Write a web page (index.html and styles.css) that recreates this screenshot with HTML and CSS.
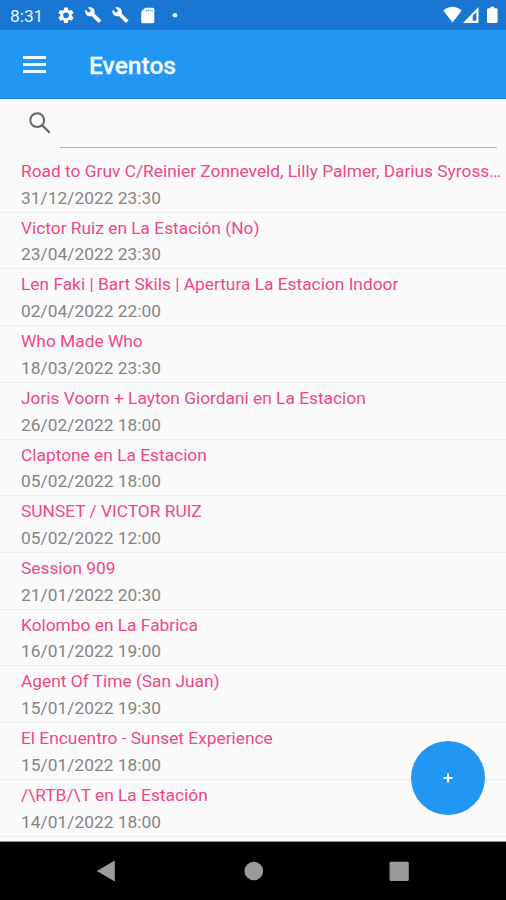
FILE: index.html
```html
<!DOCTYPE html>
<html lang="es">
<head>
<meta charset="utf-8">
<title>Eventos</title>
<link rel="stylesheet" href="styles.css">
</head>
<body>
<div class="screen">
  <div class="status">
    <span class="clock">8:31</span>
    <svg class="tray" width="126" height="30" viewBox="0 0 126 30" fill="#fff">
      <path transform="translate(-.6 5.7) scale(.8)" d="M19.14 12.94c.04-.3.06-.61.06-.94s-.02-.64-.07-.94l2.03-1.58a.49.49 0 0 0 .12-.61l-1.92-3.32a.49.49 0 0 0-.59-.22l-2.39.96a7 7 0 0 0-1.62-.94l-.36-2.54A.48.48 0 0 0 13.92 2.4h-3.84a.47.47 0 0 0-.47.41l-.36 2.54a7.4 7.4 0 0 0-1.62.94l-2.39-.96a.48.48 0 0 0-.59.22L2.74 8.87a.47.47 0 0 0 .12.61l2.03 1.58c-.05.3-.09.63-.09.94s.02.64.07.94l-2.03 1.58a.49.49 0 0 0-.12.61l1.92 3.32c.12.22.37.29.59.22l2.39-.96c.5.38 1.03.7 1.62.94l.36 2.54c.05.24.24.41.48.41h3.84c.24 0 .44-.17.47-.41l.36-2.54a7 7 0 0 0 1.62-.94l2.39.96c.22.08.47 0 .59-.22l1.92-3.32a.47.47 0 0 0-.12-.61zM12 15.6A3.6 3.6 0 1 1 12 8.400a3.6 3.6 0 0 1 0 7.2z"/>
      <path id="wrench" transform="translate(27.4 6.4) scale(.73 .71)" d="M22.7 19l-9.100-9.100c.9-2.300.4-5-1.500-6.900-2-2-5-2.400-7.400-1.300L9 6 6 9 1.600 4.700C.4 7.100.9 10.100 2.900 12.100c1.900 1.900 4.600 2.400 6.900 1.500l9.100 9.100c.4.4 1 .4 1.400 0l2.300-2.300c.5-.4.5-1.100.1-1.400z"/>
      <use href="#wrench" transform="translate(27.3 0)"/>
      <path fill-rule="evenodd" d="M88.200 7.700h7.600q1.500 0 1.500 1.500v12.600q0 1.500-1.500 1.500H85.700q-1.500 0-1.500-1.500V11.700z"/>
      <path d="M88.300 10.500h7.500" stroke="#5a9ce2" stroke-width="1.300" stroke-dasharray="1.500 .8"/>
      <circle cx="118" cy="15.3" r="2.3"/>
    </svg>
    <svg class="signals" width="58" height="30" viewBox="0 0 58 30" fill="#fff">
      <path d="M1.300 10.500Q10.500 3 19.700 10.500L10.500 22.400z" transform="translate(2 0)"/>
      <path fill-rule="evenodd" d="M38.500 7v16H23zM36.300 12v8.700h-3.600v-4.900z"/>
      <path d="M48.300 8.200h2.200V6.800h3.600v1.400h2.200q1.300 0 1.300 1.300v12.300q0 1.300-1.300 1.300h-8q-1.300 0-1.300-1.300V9.500q0-1.300 1.300-1.300z"/>
    </svg>
  </div>
  <header class="appbar">
    <div class="menu"><i></i><i></i><i></i></div>
    <h1>Eventos</h1>
  </header>
  <main>
    <div class="search">
      <svg width="22" height="22" viewBox="0 0 22 22" fill="none" stroke="#666"><circle cx="8.2" cy="8.2" r="6.9" stroke-width="2"/><path d="M13.200 13.200L20.700 20.700" stroke-width="2.3"/></svg>
      <div class="field"></div>
    </div>
    <ul class="events">
      <li><b>Road to Gruv C/Reinier Zonneveld, Lilly Palmer, Darius Syross…</b><span>31/12/2022 23:30</span></li>
      <li><b>Victor Ruiz en La Estación (No)</b><span>23/04/2022 23:30</span></li>
      <li><b>Len Faki | Bart Skils | Apertura La Estacion Indoor</b><span>02/04/2022 22:00</span></li>
      <li><b>Who Made Who</b><span>18/03/2022 23:30</span></li>
      <li><b>Joris Voorn + Layton Giordani en La Estacion</b><span>26/02/2022 18:00</span></li>
      <li><b>Claptone en La Estacion</b><span>05/02/2022 18:00</span></li>
      <li><b>SUNSET / VICTOR RUIZ</b><span>05/02/2022 12:00</span></li>
      <li><b>Session 909</b><span>21/01/2022 20:30</span></li>
      <li><b>Kolombo en La Fabrica</b><span>16/01/2022 19:00</span></li>
      <li><b>Agent Of Time (San Juan)</b><span>15/01/2022 19:30</span></li>
      <li><b>El Encuentro - Sunset Experience</b><span>15/01/2022 18:00</span></li>
      <li><b>/\RTB/\T en La Estación</b><span>14/01/2022 18:00</span></li>
    </ul>
    <button class="fab" aria-label="Agregar"><svg width="10" height="10" viewBox="0 0 10 10"><path d="M5 .4v9.200M.4 5h9.200" stroke="#fff" stroke-width="2"/></svg></button>
  </main>
  <nav class="navbar">
    <svg width="506" height="58" viewBox="0 0 506 58" fill="#9b9b9b">
      <path d="M96.800 29L114.800 18.500v21z"/>
      <circle cx="253.800" cy="29" r="9.3"/>
      <rect x="389.500" y="19.700" width="19.300" height="19.300" rx="1.500"/>
    </svg>
  </nav>
</div>
</body>
</html>
```
FILE: styles.css
```css
* { box-sizing: border-box; }
body { margin: 0; font-family: Roboto, "Liberation Sans", sans-serif; }
.screen { width: 506px; height: 900px; display: flex; flex-direction: column; overflow: hidden; background: #fafafa; }
.status { height: 30px; flex: none; display: flex; align-items: center; background: #1976d2; color: #fff; padding: 0 8px 0 10px; }
.clock { width: 47px; font-size: 17.3px; line-height: 30px; padding-top: 2px; color: #e8f1fb; }
.signals { margin-left: auto; }
.appbar { height: 69px; flex: none; display: flex; align-items: center; padding-left: 23px; background: #2196f3; border-bottom: 1px solid #1681df; }
.menu { width: 66px; display: grid; gap: 4px; }
.menu i { width: 23px; height: 3px; background: #f0f8ff; }
h1 { margin: 3px 0 0; font-size: 24.6px; font-weight: 500; line-height: 32px; color: #f4faff; -webkit-text-stroke: .3px #f4faff; }
main { position: relative; flex: 1; min-height: 0; border-bottom: 1px solid #8b8b8b; }
.search { height: 57px; display: flex; padding: 13px 9px 0 29px; gap: 9px; }
.field { flex: 1; height: 36px; border-bottom: 1.5px solid #b2b2b2; }
.events { list-style: none; margin: 0; padding: 0; }
.events li { height: 56.73px; display: flex; flex-direction: column; padding: 2px 4px 0 21px; border-bottom: 1px solid #efefef; }
.events b, .events span { font-size: 17.33px; font-weight: 400; line-height: 26.7px; white-space: nowrap; }
.events b { color: #f04885; }
.events span { color: #858585; letter-spacing: .03px; }
.fab { position: absolute; left: 411px; top: 641.5px; width: 74px; height: 74px; padding: 0; border: 0; border-radius: 50%; background: #2196f3; display: grid; place-items: center; }
.navbar { height: 58px; flex: none; background: #000; }
.navbar svg { display: block; }
```
